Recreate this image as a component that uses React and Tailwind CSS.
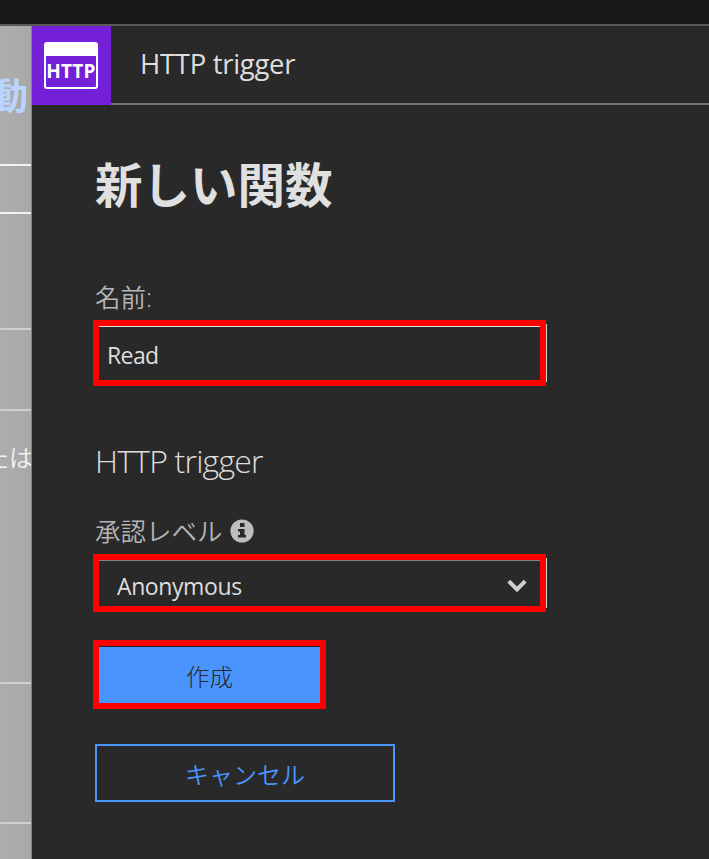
import React from 'react';

const latin = "font-['Open_Sans','Noto_Sans_CJK_JP',sans-serif]";
const stripLine = 'h-[2px] shrink-0 bg-[#cfcfcf]';

function BackgroundStrip() {
  return (
    <div className="flex w-8 shrink-0 flex-col overflow-hidden border-r border-[#858585] bg-gradient-to-r from-[#adadad] to-[#a8a8a8]">
      <div className="flex h-[138px] shrink-0 items-center justify-end pr-[3px]">
        <span className="shrink-0 text-[37px] leading-none font-bold text-[#b9d4ff]">動</span>
      </div>
      <div className="h-[2px] shrink-0 bg-[#f2f2f2]" />
      <div className="h-[46px] shrink-0" />
      <div className="h-[2px] shrink-0 bg-[#f2f2f2]" />
      <div className="h-[114px] shrink-0" />
      <div className={stripLine} />
      <div className="h-[79px] shrink-0" />
      <div className={stripLine} />
      <div className="flex h-[271px] shrink-0 items-start justify-end pt-[35px]">
        <span className="-mr-[2px] shrink-0 text-[24px] leading-none font-[350] whitespace-nowrap text-[#f4f4f4]">たは</span>
      </div>
      <div className={stripLine} />
      <div className="h-[138px] shrink-0" />
      <div className={stripLine} />
    </div>
  );
}

function HttpIcon() {
  return (
    <div className="flex h-[79px] w-[79px] shrink-0 items-center justify-center bg-[#7320d8]">
      <div className="mr-px flex h-[47px] w-[54px] flex-col overflow-hidden rounded-[3px] border-2 border-white">
        <div className="h-[12px] shrink-0 bg-white" />
        <div className="flex flex-1 items-center justify-center pb-px text-[19px] leading-none font-bold tracking-[0.3px] text-white">
          HTTP
        </div>
      </div>
    </div>
  );
}

export default function App() {
  return (
    <div className={`flex h-[859px] w-[709px] flex-col overflow-hidden bg-[#292929] ${latin}`}>
      <div className="h-[26px] shrink-0 border-b-2 border-[#5c5a58] bg-[#181818]" />
      <div className="flex min-h-0 flex-1">
        <BackgroundStrip />
        <div className="flex min-w-0 flex-1 flex-col">
          <header className="flex h-[79px] shrink-0">
            <HttpIcon />
            <div className="flex flex-1 items-center border-b-2 border-[#737373] pb-[2px] pl-[29px]">
              <span className="text-[27.5px] leading-none font-normal tracking-[-0.3px] whitespace-nowrap text-[#dedede]">HTTP trigger</span>
            </div>
          </header>
          <main className="flex flex-col items-start pl-[61px]">
            <h1 className="mt-[53px] ml-[2px] h-[54px] text-[47.5px] leading-[54px] font-bold whitespace-nowrap text-[#e0e0e0]">新しい関数</h1>
            <label className="mt-[71px] ml-[2px] h-[28px] text-[25.5px] leading-[28px] font-[350] text-[#b5b5b5]">名前:</label>
            <div className="mt-[9px] flex h-[66px] items-center">
              <div className="flex h-[66px] w-[453px] items-stretch border-6 border-[#ff0000]">
                <div className="flex flex-1 items-center border-t border-[#dddddd] pt-[4px] pl-[8px] text-[23px] leading-none tracking-[-0.6px] text-[#dedede]">
                  Read
                </div>
              </div>
              <div className="h-[58px] w-px bg-[#d2d2d2]" />
            </div>
            <h2 className="mt-[55px] ml-[2px] h-[40px] text-[32px] leading-[40px] font-[350] tracking-[-0.8px] whitespace-nowrap text-[#dedede]">HTTP trigger</h2>
            <div className="mt-[35px] ml-[2px] flex h-[30px] items-center">
              <span className="text-[25.5px] leading-[30px] font-[350] whitespace-nowrap text-[#b5b5b5]">承認レベル</span>
              <svg className="ml-[7px]" width="24" height="24" viewBox="0 0 24 24">
                <circle cx="12" cy="12" r="11.6" fill="#bdbdbd" />
                <path d="M10 4h4.500v4H10zM8 10h6.500v6H16v2.500H8V16h2v-3.500H8z" fill="#292929" />
              </svg>
            </div>
            <div className="mt-[8px] flex h-[58px] items-center">
              <div className="flex h-[58px] w-[453px] items-stretch border-6 border-[#ff0000]">
                <div className="flex flex-1 items-center justify-between border-t border-[#858585] pr-[13px] pl-[18px]">
                  <span className="pt-[6px] text-[23px] leading-none tracking-[-0.4px] text-[#dedede]">Anonymous</span>
                  <svg className="mt-[5px]" width="20" height="14" viewBox="0 0 20 14" fill="none" stroke="#d0d0d0" strokeWidth="4">
                    <path d="M1.800 2.200L10 10.400l8.200-8.200" />
                  </svg>
                </div>
              </div>
              <div className="h-[50px] w-px bg-[#d2d2d2]" />
            </div>
            <div className="mt-[28px] flex h-[69px] w-[233px] border-6 border-[#ff0000]">
              <button className="flex-1 border-t border-[#20242b] bg-[#4a94ff] pt-[5px] text-[23.5px] leading-none font-light text-[#292929]">作成</button>
            </div>
            <button className="mt-[35px] ml-[2px] h-[58px] w-[300px] border-2 border-[#4a94ff] pt-[3px] text-[24px] leading-none font-[350] text-[#4a94ff]">キャンセル</button>
          </main>
        </div>
      </div>
    </div>
  );
}
